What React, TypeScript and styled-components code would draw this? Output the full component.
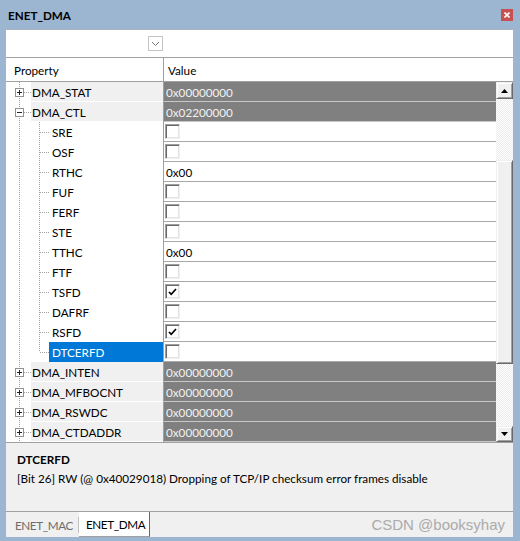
import React from "react";
import styled, { createGlobalStyle } from "styled-components";

const GlobalStyle = createGlobalStyle`
  html, body {
    margin: 0;
    padding: 0;
  }
  body {
    font-family: Lato, "Noto Sans", sans-serif;
    font-size: 11.7px;
    color: #000;
  }
  * {
    box-sizing: border-box;
  }
`;

const Window = styled.div`
  width: 520px;
  height: 541px;
  background: #9cb5d0;
  display: flex;
  flex-direction: column;
`;

const TitleBar = styled.div`
  height: 29px;
  flex: none;
  display: flex;
  align-items: center;
  justify-content: space-between;
  padding: 0 7px 0 8px;
  font-weight: 700;
`;

const CloseButton = styled.div`
  width: 12px;
  height: 12px;
  background: #c75050;
  display: flex;
  align-items: center;
  justify-content: center;
`;

const Body = styled.div`
  flex: 1;
  margin: 0 6px 4px 5px;
  border: 1px solid #aab4c0;
  border-bottom: 0;
  background: #fff;
  display: flex;
  flex-direction: column;
  min-height: 0;
`;

const Toolbar = styled.div`
  height: 28px;
  flex: none;
  display: flex;
  align-items: center;
  padding-left: 142px;
  border-bottom: 1px solid #a0a0a0;
`;

const DropButton = styled.div`
  width: 15px;
  height: 15px;
  border: 1px solid #c4c4c4;
  display: flex;
  align-items: center;
  justify-content: center;
`;

const HeaderRow = styled.div`
  height: 24px;
  flex: none;
  display: flex;
  border-bottom: 1px solid #a0a0a0;
`;

const HeaderCell = styled.div<{ $first?: boolean }>`
  display: flex;
  align-items: center;
  width: ${(p) => (p.$first ? "158px" : "auto")};
  flex: ${(p) => (p.$first ? "none" : "1")};
  padding-left: ${(p) => (p.$first ? "8px" : "4px")};
  border-right: ${(p) => (p.$first ? "1px solid #a0a0a0" : "0")};
`;

const Grid = styled.div`
  height: 360px;
  flex: none;
  display: flex;
`;

const RowList = styled.div`
  flex: 1;
  display: flex;
  flex-direction: column;
`;

const Row = styled.div`
  height: 20px;
  display: flex;
`;

const PropCell = styled.div`
  width: 158px;
  flex: none;
  display: flex;
  border-right: 1px solid #a0a0a0;
`;

const ParentGutter = styled.div`
  width: 25px;
  flex: none;
  display: flex;
  align-items: center;
  padding-left: 9px;
  background: linear-gradient(#a0a0a0 50%, transparent 0) 13px 0 / 1px 2px
    repeat-y;
`;

const ChildGutter = styled.div`
  width: 43px;
  flex: none;
  display: flex;
  align-items: center;
  padding-left: 33px;
  background: linear-gradient(#a0a0a0 50%, transparent 0) 13px 0 / 1px 2px
    repeat-y;
`;

const Trunk = styled.div<{ $half?: boolean }>`
  width: 1px;
  align-self: flex-start;
  height: ${(p) => (p.$half ? "50%" : "100%")};
  background: linear-gradient(#a0a0a0 50%, transparent 0) 0 0 / 1px 2px
    repeat-y;
`;

const Stub = styled.div`
  flex: 1;
  height: 0;
  border-top: 1px dotted #a0a0a0;
`;

const Expander = styled.div`
  width: 9px;
  height: 9px;
  flex: none;
  border: 1px solid #919191;
  background: #fff;
  display: flex;
  align-items: center;
  justify-content: center;
`;

const Label = styled.div<{ $parent?: boolean; $selected?: boolean }>`
  flex: 1;
  display: flex;
  align-items: center;
  height: ${(p) => (p.$parent ? "19px" : "20px")};
  padding-left: ${(p) => (p.$parent ? "1px" : "3px")};
  background: ${(p) =>
    p.$selected ? "#0078d7" : p.$parent ? "#f0f0f0" : "transparent"};
  color: ${(p) => (p.$selected ? "#fff" : "#000")};
  white-space: nowrap;
`;

const ValueCell = styled.div<{ $dark?: boolean }>`
  flex: 1;
  display: flex;
  align-items: center;
  padding-left: 2px;
  background: ${(p) => (p.$dark ? "#808080" : "#fff")};
  color: ${(p) => (p.$dark ? "#f2f2f2" : "#000")};
  border-bottom: 1px solid ${(p) => (p.$dark ? "#c8c8c8" : "#a8a8a8")};
`;

const CheckBox = styled.div`
  width: 15px;
  height: 15px;
  margin-left: -1px;
  background: #fff;
  border: 1px solid;
  border-color: #a0a0a0 #f0f0f0 #f0f0f0 #a0a0a0;
  box-shadow: inset 1px 1px 0 #696969, inset -1px -1px 0 #e3e3e3;
  display: flex;
  align-items: center;
  justify-content: center;
`;

const ScrollBar = styled.div`
  width: 17px;
  flex: none;
  display: flex;
  flex-direction: column;
`;

const ScrollButton = styled.div<{ $h: number }>`
  height: ${(p) => p.$h}px;
  flex: none;
  background: #f0f0f0;
  border: 1px solid;
  border-color: #f0f0f0 #696969 #696969 #f0f0f0;
  box-shadow: inset 1px 1px 0 #fff, inset -1px -1px 0 #a0a0a0;
  display: flex;
  align-items: center;
  justify-content: center;
`;

const Track = styled.div`
  flex: 1;
  display: flex;
  flex-direction: column;
  background: repeating-conic-gradient(#fff 0 25%, #ececec 0 50%) 0 0 / 2px
    2px;
`;

const TrackGap = styled.div<{ $h: number }>`
  height: ${(p) => p.$h}px;
  flex: none;
`;

const Thumb = styled.div`
  height: 204px;
  flex: none;
  background: #f0f0f0;
  border: 1px solid;
  border-color: #f0f0f0 #696969 #696969 #f0f0f0;
  box-shadow: inset 1px 1px 0 #fff, inset -1px -1px 0 #a0a0a0;
`;

const DescPanel = styled.div`
  height: 70px;
  flex: none;
  background: #f0f0f0;
  border-top: 1px solid #a0a0a0;
  border-bottom: 1px solid #a0a0a0;
  padding: 7px 11px 0;
  line-height: 19px;
`;

const DescTitle = styled.div`
  font-weight: 700;
`;

const TabStrip = styled.div`
  flex: 1;
  display: flex;
  align-items: stretch;
  background: #f0f0f0;
`;

const Tab = styled.div<{ $active?: boolean }>`
  display: flex;
  align-items: center;
  flex: none;
  white-space: nowrap;
  letter-spacing: -0.4px;
  width: ${(p) => (p.$active ? "71px" : "72px")};
  padding-left: ${(p) => (p.$active ? "7px" : "9px")};
  background: ${(p) => (p.$active ? "#fff" : "transparent")};
  color: ${(p) => (p.$active ? "#000" : "#6d6d6d")};
  border-right: 1px solid ${(p) => (p.$active ? "#696969" : "transparent")};
  border-bottom: ${(p) => (p.$active ? "1px solid #a0a0a0" : "0")};
`;

const TabDivider = styled.div`
  width: 1px;
  margin: 5px 0 4px;
  background: #c0c0c0;
`;

const Watermark = styled.div`
  margin-left: auto;
  padding-right: 8px;
  display: flex;
  align-items: center;
  font-family: "Liberation Sans", Arial, sans-serif;
  font-size: 15px;
  color: #ababab;
`;

type Child = { name: string; value: string | boolean };

const children: Child[] = [
  { name: "SRE", value: false },
  { name: "OSF", value: false },
  { name: "RTHC", value: "0x00" },
  { name: "FUF", value: false },
  { name: "FERF", value: false },
  { name: "STE", value: false },
  { name: "TTHC", value: "0x00" },
  { name: "FTF", value: false },
  { name: "TSFD", value: true },
  { name: "DAFRF", value: false },
  { name: "RSFD", value: true },
  { name: "DTCERFD", value: false },
];

const lower = ["DMA_INTEN", "DMA_MFBOCNT", "DMA_RSWDC", "DMA_CTDADDR"];

const Sign = ({ plus }: { plus: boolean }) => (
  <svg width="7" height="7" viewBox="0 0 7 7">
    <path d="M1 3.5h5" stroke="#222" strokeWidth="1" />
    {plus && <path d="M3.5 1v5" stroke="#222" strokeWidth="1" />}
  </svg>
);

const ParentRow = ({
  name,
  value,
  open,
}: {
  name: string;
  value: string;
  open?: boolean;
}) => (
  <Row>
    <PropCell>
      <ParentGutter>
        <Expander>
          <Sign plus={!open} />
        </Expander>
        <Stub />
      </ParentGutter>
      <Label $parent>{name}</Label>
    </PropCell>
    <ValueCell $dark>{value}</ValueCell>
  </Row>
);

const Check = ({ on }: { on: boolean }) => (
  <CheckBox>
    {on && (
      <svg width="9" height="8" viewBox="0 0 9 8">
        <path d="M1 4l2.2 2.3L8 1" stroke="#000" strokeWidth="1.7" fill="none" />
      </svg>
    )}
  </CheckBox>
);

const ChildRow = ({ item, last }: { item: Child; last: boolean }) => (
  <Row>
    <PropCell>
      <ChildGutter>
        <Trunk $half={last} />
        <Stub />
      </ChildGutter>
      <Label $selected={last}>{item.name}</Label>
    </PropCell>
    <ValueCell>
      {typeof item.value === "boolean" ? (
        <Check on={item.value} />
      ) : (
        item.value
      )}
    </ValueCell>
  </Row>
);

const App = () => {
  return (
    <Window>
      <GlobalStyle />
      <TitleBar>
        <span>ENET_DMA</span>
        <CloseButton>
          <svg width="6" height="6" viewBox="0 0 6 6">
            <path d="M0.5 0.5l5 5M5.5 0.5l-5 5" stroke="#fff" strokeWidth="1.6" />
          </svg>
        </CloseButton>
      </TitleBar>
      <Body>
        <Toolbar>
          <DropButton>
            <svg width="9" height="6" viewBox="0 0 9 6">
              <path d="M1 1l3.5 3.5L8 1" stroke="#777" strokeWidth="1" fill="none" />
            </svg>
          </DropButton>
        </Toolbar>
        <HeaderRow>
          <HeaderCell $first>Property</HeaderCell>
          <HeaderCell>Value</HeaderCell>
        </HeaderRow>
        <Grid>
          <RowList>
            <ParentRow name="DMA_STAT" value="0x00000000" />
            <ParentRow name="DMA_CTL" value="0x02200000" open />
            {children.map((c, i) => (
              <ChildRow key={c.name} item={c} last={i === children.length - 1} />
            ))}
            {lower.map((n) => (
              <ParentRow key={n} name={n} value="0x00000000" />
            ))}
          </RowList>
          <ScrollBar>
            <ScrollButton $h={17}>
              <svg width="7" height="4" viewBox="0 0 7 4">
                <path d="M0 4h7L3.5 0z" fill="#000" />
              </svg>
            </ScrollButton>
            <Track>
              <TrackGap $h={61} />
              <Thumb />
            </Track>
            <ScrollButton $h={16}>
              <svg width="7" height="4" viewBox="0 0 7 4">
                <path d="M0 0h7L3.5 4z" fill="#000" />
              </svg>
            </ScrollButton>
          </ScrollBar>
        </Grid>
        <DescPanel>
          <DescTitle>DTCERFD</DescTitle>
          <div>
            [Bit 26] RW (@ 0x40029018) Dropping of TCP/IP checksum error frames
            disable
          </div>
        </DescPanel>
        <TabStrip>
          <Tab>ENET_MAC</Tab>
          <TabDivider />
          <Tab $active>ENET_DMA</Tab>
          <Watermark>CSDN @booksyhay</Watermark>
        </TabStrip>
      </Body>
    </Window>
  );
};

export default App;
